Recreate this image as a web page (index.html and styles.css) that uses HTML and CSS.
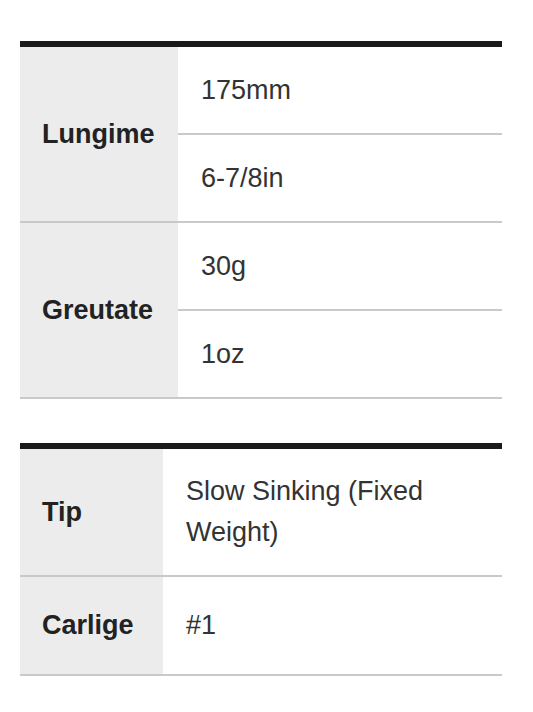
FILE: index.html
```html
<!DOCTYPE html>
<html>
<head>
<meta charset="utf-8">
<link rel="stylesheet" href="styles.css">
</head>
<body>
<div class="page">
  <table class="spec spec-a">
    <tr>
      <th rowspan="2">Lungime</th>
      <td>175mm</td>
    </tr>
    <tr>
      <td>6-7/8in</td>
    </tr>
    <tr>
      <th rowspan="2">Greutate</th>
      <td>30g</td>
    </tr>
    <tr>
      <td>1oz</td>
    </tr>
  </table>

  <table class="spec spec-b">
    <tr>
      <th>Tip</th>
      <td>Slow Sinking (Fixed Weight)</td>
    </tr>
    <tr class="tall">
      <th>Carlige</th>
      <td>#1</td>
    </tr>
  </table>
</div>
</body>
</html>
```

FILE: styles.css
```css
html, body {
  margin: 0;
  padding: 0;
  background: #ffffff;
}

.page {
  padding: 41px 0 0 20px;
  font-family: "Liberation Sans", Arial, sans-serif;
}

.spec {
  width: 482px;
  border-collapse: separate;
  border-spacing: 0;
  border-top: 6px solid #1a1a1a;
  font-size: 27px;
  line-height: 42px;
  color: #333333;
}

.spec th,
.spec td {
  border-bottom: 2px solid #c9c9c9;
  padding: 22px 23px;
  text-align: left;
  vertical-align: middle;
}

.spec th {
  background: #ececec;
  color: #222222;
  font-weight: bold;
  padding-left: 22px;
  padding-right: 10px;
}

.spec-a th {
  width: 126px;
}

.spec-b {
  margin-top: 44px;
  line-height: 41px;
}

.spec-b th {
  width: 111px;
}

.spec-b .tall th,
.spec-b .tall td {
  padding-top: 28px;
  padding-bottom: 28px;
}
```
